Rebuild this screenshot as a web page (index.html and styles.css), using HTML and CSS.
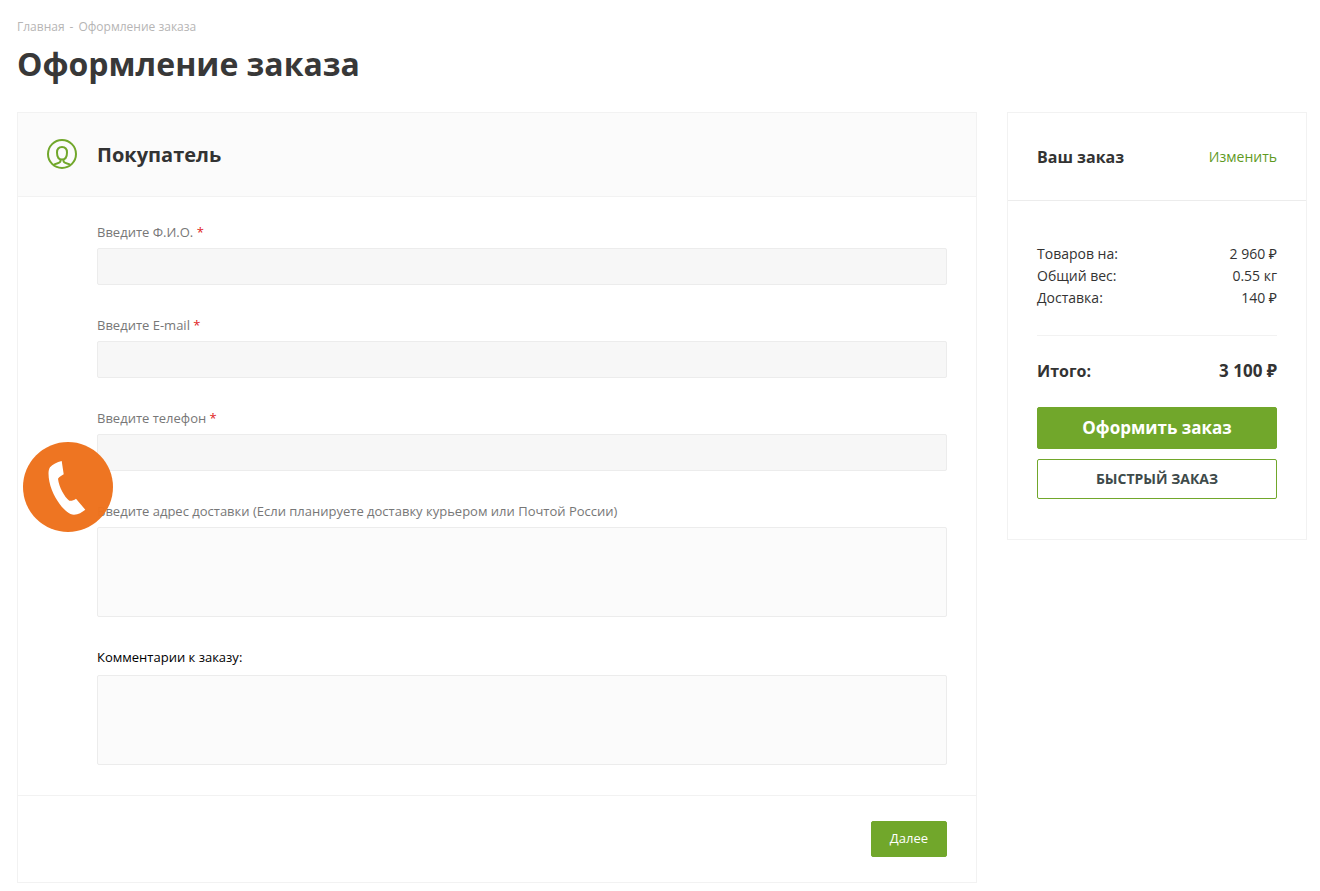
FILE: index.html
```
<!DOCTYPE html>
<html lang="ru">
<head>
    <meta charset="UTF-8">
    <meta name="viewport" content="width=device-width, initial-scale=1.0">
    <title>Оформление заказа</title>
    <link rel="stylesheet" href="styles.css">
</head>
<body>
    <div class="wrapper">
        <nav class="breadcrumbs">
            <a href="#">Главная</a>
            <span>-</span>
            <span>Оформление заказа</span>
        </nav>
        <h1 class="page-title">Оформление заказа</h1>

        <div class="order">
            <form class="card order-form" id="order-form">
                <div class="card-head">
                    <svg class="user-icon" width="30" height="30" viewBox="0 0 30 30" fill="none" stroke="#71a72b" stroke-width="2">
                        <circle cx="15" cy="15" r="14"/>
                        <path d="M10 13.500c0-3.500 2-5.500 5-5.500s5 2 5 5.500c0 4-1.500 7-5 7s-5-3-5-7z"/>
                        <path d="M13.500 20v2c0 1.500-1.500 2-3.500 2.500-1.500.4-2.500.8-3.500 1.500M16.500 20v2c0 1.500 1.500 2 3.500 2.500 1.500.4 2.500.8 3.500 1.500"/>
                    </svg>
                    <h2 class="card-title">Покупатель</h2>
                </div>
                <div class="fields">
                    <div class="field">
                        <label for="fio">Введите Ф.И.О. <span class="star">*</span></label>
                        <input type="text" id="fio" name="fio">
                    </div>
                    <div class="field">
                        <label for="email">Введите E-mail <span class="star">*</span></label>
                        <input type="email" id="email" name="email">
                    </div>
                    <div class="field">
                        <label for="phone">Введите телефон <span class="star">*</span></label>
                        <input type="tel" id="phone" name="phone">
                    </div>
                    <div class="field">
                        <label for="address">Введите адрес доставки (Если планируете доставку курьером или Почтой России)</label>
                        <textarea id="address" name="address"></textarea>
                    </div>
                    <div class="field field-comment">
                        <label for="comment">Комментарии к заказу:</label>
                        <textarea id="comment" name="comment"></textarea>
                    </div>
                </div>
                <div class="card-foot">
                    <button type="button" class="btn btn-next">Далее</button>
                </div>
            </form>

            <aside class="card total">
                <div class="total-head">
                    <h3>Ваш заказ</h3>
                    <a href="#">Изменить</a>
                </div>
                <div class="total-body">
                    <dl class="total-rows">
                        <div class="row"><dt>Товаров на:</dt><dd>2 960 ₽</dd></div>
                        <div class="row"><dt>Общий вес:</dt><dd>0.55 кг</dd></div>
                        <div class="row"><dt>Доставка:</dt><dd>140 ₽</dd></div>
                    </dl>
                    <div class="row total-sum"><span>Итого:</span><strong>3 100 ₽</strong></div>
                    <button type="submit" form="order-form" class="btn btn-order">Оформить заказ</button>
                    <button type="button" class="btn btn-fast">Быстрый заказ</button>
                </div>
            </aside>
        </div>
    </div>

    <!-- кнопка обратного звонка -->
    <button type="button" class="callback" aria-label="Заказать звонок">
        <svg width="90" height="90" viewBox="0 0 90 90">
            <path fill="#fff" d="M38.700 19C34 20 29.500 22.500 27 25.300 26 27 25.500 29 25.500 31.300c0 11 5 22.500 11.500 31.200C41.500 68.500 46.500 72.700 51 72.700c4.500 0 8-2.500 11.300-5L53 56.700c-2.200 1.700-4.500 2.300-6.700 2C41.500 55 36 45 35 36.700c1.500-1.800 3.500-3.200 5.700-4.400z"/>
        </svg>
    </button>
</body>
</html>
```
FILE: styles.css
```
*{
    box-sizing: border-box;
}
body{
    margin: 0;
    background: #fff;
    color: #333;
    font-family: "Open Sans", "Noto Sans", sans-serif;
    font-size: 14px;
    line-height: 22px;
}
h1, h2, h3, dl, dd{
    margin: 0;
}
a{
    color: #5f9a1f;
    text-decoration: none;
}
button, input, textarea{
    font-family: inherit;
}
.wrapper{
    padding: 17px 13px 8px 17px;
}

/* шапка страницы */
.breadcrumbs{
    display: flex;
    gap: 5px;
    font-size: 12px;
    line-height: 20px;
    color: #b6b5b5;
}
.breadcrumbs a{
    color: inherit;
}
.page-title{
    margin: 5px 0 26px;
    font-size: 32px;
    line-height: 44px;
    color: #383838;
}

.order{
    display: grid;
    grid-template-columns: 1fr 300px;
    gap: 30px;
    align-items: start;
}
.card{
    border: 1px solid #f2f2f2;
}

/* форма покупателя */
.card-head{
    display: flex;
    align-items: flex-start;
    gap: 20px;
    padding: 26px 29px 25px;
    background: #fbfbfb;
    border-bottom: 1px solid #f2f2f2;
}
.card-title{
    font-size: 20px;
    line-height: 32px;
}
.fields{
    display: flex;
    flex-direction: column;
    gap: 30px;
    padding: 25px 29px 30px 79px;
}
.field{
    display: flex;
    flex-direction: column;
    gap: 6px;
}
.field label{
    font-size: 13px;
    line-height: 20px;
    color: #777;
}
.field .star{
    color: #e02222;
}
.field input, .field textarea{
    width: 100%;
    height: 37px;
    padding: 8px 12px;
    border: 1px solid #ececec;
    border-radius: 2px;
    background: #f7f7f7;
    font-size: 13px;
}
.field textarea{
    height: 90px;
    background: #fbfbfb;
    resize: none;
}
.field-comment{
    gap: 8px;
}
.field-comment label{
    color: #000;
}
.card-foot{
    display: flex;
    justify-content: flex-end;
    padding: 25px 29px;
    border-top: 1px solid #f2f2f2;
}

.btn{
    padding: 0 18px 2px;
    border: 1px solid #71a72b;
    border-radius: 2px;
    background: #71a72b;
    color: #fff;
    cursor: pointer;
}
.btn-next{
    height: 36px;
    font-size: 13px;
}

/* итог заказа */
.total-head{
    display: flex;
    justify-content: space-between;
    align-items: center;
    height: 88px;
    padding: 0 29px;
    border-bottom: 1px solid #ececec;
}
.total-head h3{
    font-size: 16px;
}
.total-body{
    display: flex;
    flex-direction: column;
    padding: 42px 29px 40px;
}
.row{
    display: flex;
    justify-content: space-between;
}
.total-rows{
    padding-bottom: 26px;
    border-bottom: 1px solid #f2f2f2;
}
.total-sum{
    padding: 24px 0 25px;
    font-size: 16px;
    font-weight: 700;
}
.total-sum strong{
    font-size: 17px;
    font-weight: 700;
}
.btn-order{
    height: 42px;
    margin-bottom: 10px;
    font-size: 17px;
    font-weight: 700;
}
.btn-fast{
    height: 40px;
    background: #fff;
    color: #3e4a4a;
    font-size: 14px;
    font-weight: 700;
    text-transform: uppercase;
}

.callback{
    position: fixed;
    left: 23px;
    top: 442px;
    width: 90px;
    height: 90px;
    padding: 0;
    border: 0;
    border-radius: 50%;
    background: #ee731e;
    opacity: .98;
    cursor: pointer;
}
.callback svg{
    display: block;
}
```
